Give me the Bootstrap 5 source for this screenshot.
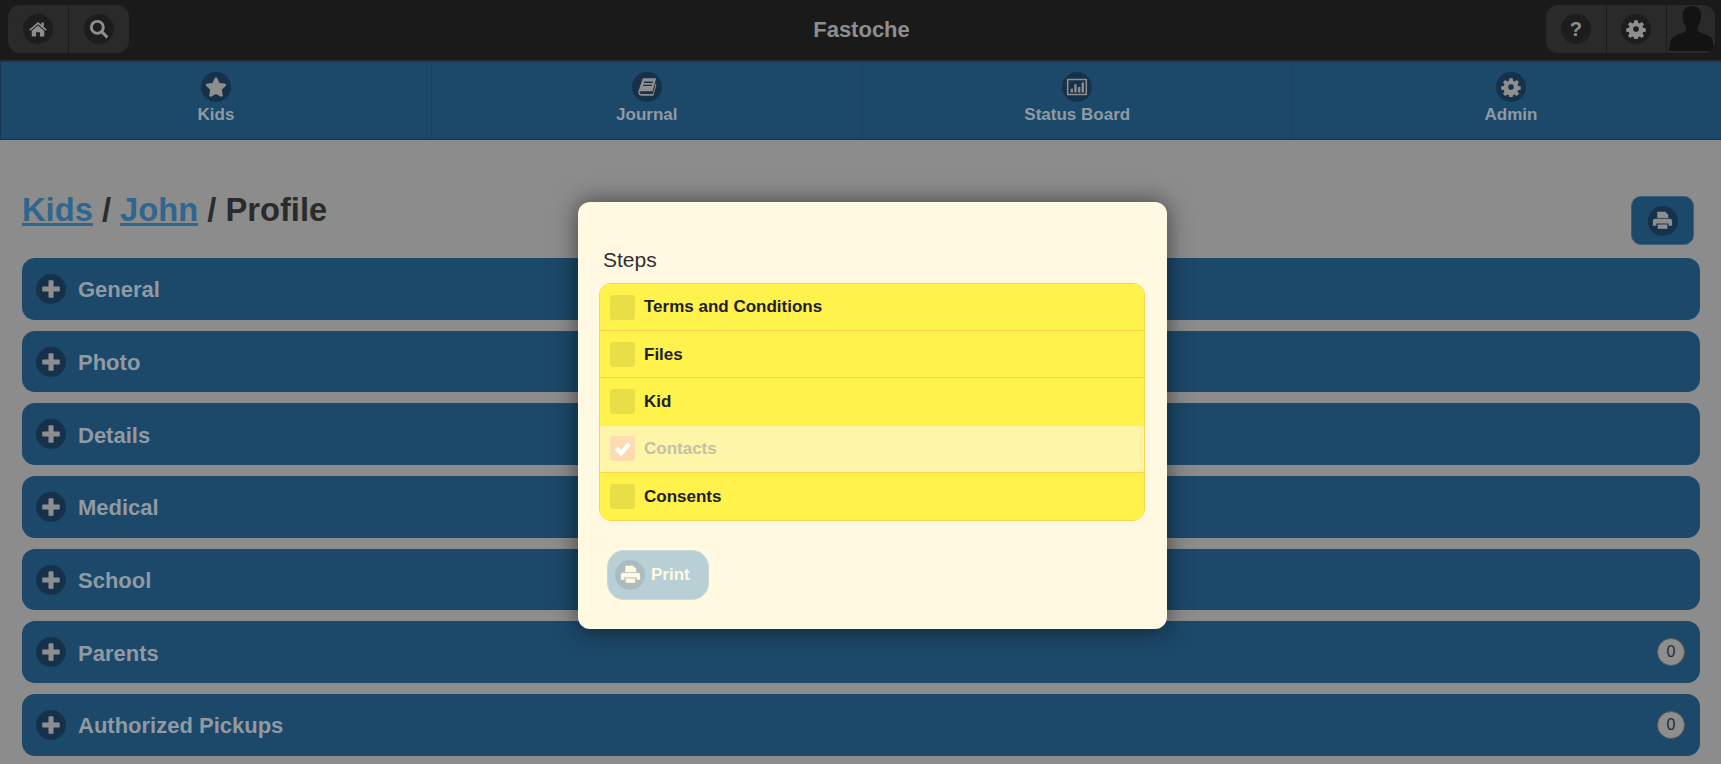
<!DOCTYPE html>
<html lang="en">
<head>
  <meta charset="UTF-8">
  <meta name="viewport" content="width=device-width, initial-scale=1">
  <title>Fastoche</title>
  <link href="https://cdn.jsdelivr.net/npm/bootstrap@5.3.0/dist/css/bootstrap.min.css" rel="stylesheet">
  <style>
    html, body { height: 100%; }
    body { background: #8c8c8c; font-family: "Liberation Sans", Arial, sans-serif; overflow: hidden; position: relative; color: #2b2b2b; }
    .top-bar { height: 61px; background: #1a1a1a; border-bottom: 1px solid #2c2c2c; padding: 5px 6px 0 8px; }
    .top-side { flex: 1 1 0; }
    .top-title { color: #8e8e8e; font-size: 22px; font-weight: 700; line-height: 49px; }
    .tool-group { height: 48px; background: #2a2a2a; border-radius: 12px; overflow: hidden; }
    .tool-btn { width: 60.5px; height: 48px; border-right: 1px solid #1c1c1c; }
    .tool-btn:last-child { border-right: 0; }
    .avatar-cell { width: 48px; height: 48px; background: #2a2a2a; }
    .ic-circle { width: 30px; height: 30px; border-radius: 50%; flex-shrink: 0; }
    .ic-dark { background: #1d1d1d; }
    .ic-blue { background: #16314a; }
    .ic-circle svg { fill: #8e8e8e; display: block; }
    .main-nav { height: 79px; background: #1c4869; border-top: 1px solid #16344d; border-bottom: 1px solid #16344d; border-left: 1px solid #16344d; }
    .nav-cell { flex: 0 0 430.5px; border-right: 1px solid #1a4160; padding-top: 10px; color: #8f9aa3; font-size: 17px; font-weight: 700; line-height: 20px; }
    .nav-cell:first-child { flex-basis: 431px; }
    .nav-cell:last-child { flex: 1 1 0; border-right: 0; padding-left: 8px; }
    .nav-cell .ic-circle { margin-bottom: 3px; }
    .page-body { padding: 53px 21px 0 22px; }
    .page-head { height: 65px; }
    .page-head h1 { font-size: 32.7px; font-weight: 700; margin: 0; line-height: 30px; padding-top: 2px; color: #2b2b2b; }
    .page-head a { color: #2e668f; }
    .print-top { width: 63px; height: 49px; margin: 3px 6px 0 0; background: #1c4869; border-radius: 10px; border: 1px solid #3a5f7c; }
    .collapse-row { height: 61.7px; margin-bottom: 11px; background: #1c4869; border-radius: 13px; padding: 0 15px 0 14px; color: #8f9aa3; font-size: 22px; font-weight: 700; }
    .collapse-row .ic-circle { margin-right: 12px; }
    .row-label { padding-top: 2px; }
    .count-pill { width: 28px; height: 28px; border-radius: 50%; background: #8e8e8e; color: #2b2b2b; font-size: 16px; font-weight: 400; border: 1px solid #5c5c5c; }
    .steps-box { position: absolute; left: 578px; top: 202px; width: 589px; height: 427px; background: #fff9e1; border-radius: 12px; box-shadow: 0 0 24px rgba(0,0,0,.55); padding: 46px 22px 0 21px; }
    .steps-title { font-size: 21px; line-height: 24px; margin: 0 0 11px 4px; color: #2f2f33; }
    .step-list { border: 1px solid #ffd24d; border-radius: 12px; overflow: hidden; }
    .step-item { height: 47.2px; background: #fff24a; border-bottom: 1px solid #ffd24d; padding-left: 10px; font-size: 17px; font-weight: 700; color: #20202a; }
    .step-item:last-child { border-bottom: 0; }
    .step-plain { border-bottom-color: transparent; }
    .step-done { background: #fff5a8; color: #c4c1a8; }
    .step-box { width: 25px; height: 25px; border-radius: 3px; background: #e8df46; margin-right: 9px; }
    .step-done .step-box { background: #fddcb2; }
    .print-btn { width: 102px; height: 50px; margin: 29px 0 0 8px; background: #b9cfd6; border-radius: 17px; border: 1px solid #c9dad8; padding-left: 7px; color: #fff9e1; font-size: 17px; font-weight: 700; }
    .print-btn .ic-circle { background: #a9bcc0; margin-right: 6px; }
    .print-btn .ic-circle svg { fill: #fff9e1; }
    .help-mark { color: #8e8e8e; font-weight: 700; font-size: 20px; }
  </style>
</head>
<body>
  <svg width="0" height="0" class="position-absolute">
    <symbol id="i-home" viewBox="0 0 24 24"><path d="M12 3.500 1.500 12.600l1.300 1.500L12 6.200l9.200 7.900 1.300-1.500-3.500-3V4.200h-3v2.800z"/><path d="M12 7.800 4.500 14.200V21h5.200v-5h4.600v5h5.200v-6.800z"/></symbol>
    <symbol id="i-search" viewBox="0 0 24 24"><circle cx="10" cy="10" r="7.200" fill="none" stroke="#8e8e8e" stroke-width="3.500"/><path d="m15.500 15.500 6.500 6.500" fill="none" stroke="#8e8e8e" stroke-width="3.600"/></symbol>
    <symbol id="i-star" viewBox="0 0 576 512"><path d="M259.3 17.8L194 150.2 47.9 171.5c-26.2 3.8-36.7 36.1-17.7 54.6l105.7 103-25 145.5c-4.5 26.3 23.2 46 46.4 33.7L288 439.6l130.7 68.7c23.2 12.2 50.9-7.4 46.4-33.7l-25-145.5 105.7-103c19-18.5 8.5-50.8-17.7-54.600L382 150.2 316.7 17.8c-11.7-23.6-45.6-23.9-57.4 0z"/></symbol>
    <symbol id="i-gear" viewBox="0 0 24 24"><path fill-rule="evenodd" d="M10 1.500h4l.5 3 1.900.8 2.500-1.800 2.800 2.800-1.800 2.500.8 1.900 3 .5v4l-3 .5-.8 1.900 1.800 2.500-2.800 2.800-2.500-1.800-1.900.8-.5 3h-4l-.5-3-1.900-.8-2.500 1.800-2.800-2.800 1.800-2.500-.8-1.900-3-.5v-4l3-.5.8-1.900-1.800-2.500 2.800-2.800 2.500 1.800 1.900-.8zM12 8.600a3.400 3.400 0 1 0 0 6.800 3.400 3.400 0 0 0 0-6.800z"/></symbol>
    <symbol id="i-print" viewBox="0 0 24 24"><path d="M6 2h9l3.500 3.500V9H6z"/><path d="M3.500 10h17A2.500 2.500 0 0 1 23 12.500V18h-4v-2.500H5V18H1v-5.500A2.500 2.500 0 0 1 3.500 10z"/><path d="M6.500 16.500h11v5h-11z"/></symbol>
    <symbol id="i-plus" viewBox="0 0 24 24"><path d="M10 1.500h4a1 1 0 0 1 1 1V9h6.500a1 1 0 0 1 1 1v4a1 1 0 0 1-1 1H15v6.500a1 1 0 0 1-1 1h-4a1 1 0 0 1-1-1V15H2.500a1 1 0 0 1-1-1v-4a1 1 0 0 1 1-1H9V2.500a1 1 0 0 1 1-1z"/></symbol>
    <symbol id="i-book" viewBox="0 0 24 24"><path fill-rule="evenodd" d="M7.500 2.500H22l-3.800 14H5.500c-1.500 0-2 1-1.500 2 .3.700 1 1 2 1h12.500l3-11.500.8 1-3.300 12.500H6c-2.500 0-4-2-3.500-4.500zM9 6h9.500l-.4 1.500H8.600zM8 9.500h9.500l-.4 1.500H7.600z"/></symbol>
    <symbol id="i-chart" viewBox="0 0 24 24"><path fill-rule="evenodd" d="M1 3h22v18H1zm1.700 1.700v14.600h18.600V4.700z"/><path d="M5 14h2.600v4H5zm4-5h2.600v9H9zm4 3h2.600v6H13zm4-5h2.600v11H17z"/></symbol>
    <symbol id="i-check" viewBox="0 0 24 24"><path d="M2 13.500 6 9.500l4.500 4.500L18.500 4l4 3.500L10.500 22z"/></symbol>
  </svg>

  <header class="top-bar d-flex align-items-start">
    <div class="top-side d-flex">
      <div class="tool-group d-flex">
        <div class="tool-btn d-flex align-items-center justify-content-center"><span class="ic-circle ic-dark d-flex align-items-center justify-content-center"><svg width="20" height="20"><use href="#i-home"/></svg></span></div>
        <div class="tool-btn d-flex align-items-center justify-content-center"><span class="ic-circle ic-dark d-flex align-items-center justify-content-center"><svg width="20" height="20"><use href="#i-search"/></svg></span></div>
      </div>
    </div>
    <div class="top-title">Fastoche</div>
    <div class="top-side d-flex justify-content-end">
      <div class="tool-group d-flex">
        <div class="tool-btn d-flex align-items-center justify-content-center"><span class="ic-circle ic-dark help-mark d-flex align-items-center justify-content-center">?</span></div>
        <div class="tool-btn d-flex align-items-center justify-content-center"><span class="ic-circle ic-dark d-flex align-items-center justify-content-center"><svg width="20" height="20"><use href="#i-gear"/></svg></span></div>
        <div class="avatar-cell"><svg width="48" height="48" viewBox="0 0 48 48" class="d-block"><path fill="#131313" d="M25 1c6 0 9 4 9 10 0 4-1.500 8-3.500 11v4c5 3 13 4 15 8l1.500 10c0 1-1 2-2 2H4c-1 0-2-1-2-2l2-9c2-5 10-6 15-9v-4c-2-3-3.500-7-3.500-11C15.500 5 19 1 25 1z"/></svg></div>
      </div>
    </div>
  </header>

  <nav class="main-nav d-flex">
    <div class="nav-cell d-flex flex-column align-items-center"><span class="ic-circle ic-blue d-flex align-items-center justify-content-center"><svg width="22" height="20"><use href="#i-star"/></svg></span>Kids</div>
    <div class="nav-cell d-flex flex-column align-items-center"><span class="ic-circle ic-blue d-flex align-items-center justify-content-center"><svg width="22" height="22"><use href="#i-book"/></svg></span>Journal</div>
    <div class="nav-cell d-flex flex-column align-items-center"><span class="ic-circle ic-blue d-flex align-items-center justify-content-center"><svg width="22" height="22"><use href="#i-chart"/></svg></span>Status Board</div>
    <div class="nav-cell d-flex flex-column align-items-center"><span class="ic-circle ic-blue d-flex align-items-center justify-content-center"><svg width="20" height="20"><use href="#i-gear"/></svg></span>Admin</div>
  </nav>

  <main class="page-body">
    <div class="page-head d-flex justify-content-between">
      <h1><a href="#">Kids</a> / <a href="#">John</a> / Profile</h1>
      <div class="print-top d-flex align-items-center justify-content-center"><span class="ic-circle ic-blue d-flex align-items-center justify-content-center"><svg width="21" height="21"><use href="#i-print"/></svg></span></div>
    </div>
    <div class="collapse-row d-flex align-items-center"><span class="ic-circle ic-blue d-flex align-items-center justify-content-center"><svg width="20" height="20"><use href="#i-plus"/></svg></span><span class="row-label">General</span></div>
    <div class="collapse-row d-flex align-items-center"><span class="ic-circle ic-blue d-flex align-items-center justify-content-center"><svg width="20" height="20"><use href="#i-plus"/></svg></span><span class="row-label">Photo</span></div>
    <div class="collapse-row d-flex align-items-center"><span class="ic-circle ic-blue d-flex align-items-center justify-content-center"><svg width="20" height="20"><use href="#i-plus"/></svg></span><span class="row-label">Details</span></div>
    <div class="collapse-row d-flex align-items-center"><span class="ic-circle ic-blue d-flex align-items-center justify-content-center"><svg width="20" height="20"><use href="#i-plus"/></svg></span><span class="row-label">Medical</span></div>
    <div class="collapse-row d-flex align-items-center"><span class="ic-circle ic-blue d-flex align-items-center justify-content-center"><svg width="20" height="20"><use href="#i-plus"/></svg></span><span class="row-label">School</span></div>
    <div class="collapse-row d-flex align-items-center"><span class="ic-circle ic-blue d-flex align-items-center justify-content-center"><svg width="20" height="20"><use href="#i-plus"/></svg></span><span class="row-label">Parents</span><span class="count-pill ms-auto d-flex align-items-center justify-content-center">0</span></div>
    <div class="collapse-row d-flex align-items-center"><span class="ic-circle ic-blue d-flex align-items-center justify-content-center"><svg width="20" height="20"><use href="#i-plus"/></svg></span><span class="row-label">Authorized Pickups</span><span class="count-pill ms-auto d-flex align-items-center justify-content-center">0</span></div>
  </main>

  <div class="steps-box">
    <div class="steps-title">Steps</div>
    <div class="step-list">
      <div class="step-item d-flex align-items-center"><span class="step-box"></span>Terms and Conditions</div>
      <div class="step-item d-flex align-items-center"><span class="step-box"></span>Files</div>
      <div class="step-item step-plain d-flex align-items-center"><span class="step-box"></span>Kid</div>
      <div class="step-item step-done d-flex align-items-center"><span class="step-box d-flex align-items-center justify-content-center"><svg width="19" height="19" fill="#fff"><use href="#i-check"/></svg></span>Contacts</div>
      <div class="step-item d-flex align-items-center"><span class="step-box"></span>Consents</div>
    </div>
    <div class="print-btn d-flex align-items-center"><span class="ic-circle d-flex align-items-center justify-content-center"><svg width="21" height="21"><use href="#i-print"/></svg></span>Print</div>
  </div>

  <script src="https://cdn.jsdelivr.net/npm/bootstrap@5.3.0/dist/js/bootstrap.bundle.min.js"></script>
</body>
</html>
